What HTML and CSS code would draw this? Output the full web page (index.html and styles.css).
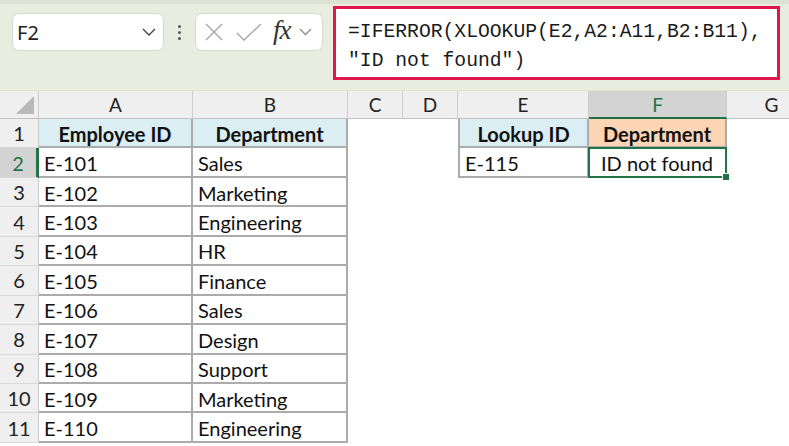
FILE: index.html
```html
<!DOCTYPE html>
<html>
<head>
    <title>IFERROR XLOOKUP</title>
    <link rel="stylesheet" href="styles.css">
</head>
<body>
    <!-- Formula bar -->
    <div class="topbar">
        <div class="namebox">
            <span>F2</span>
            <svg class="chev" width="14" height="8" viewBox="0 0 14 8"><path d="M1 1 L7 7 L13 1" fill="none" stroke="#444" stroke-width="1.4"/></svg>
        </div>
        <div class="dots"><i></i><i></i><i></i></div>
        <div class="fxbox">
            <svg width="18" height="18" viewBox="0 0 18 18"><path d="M1 1 L17 17 M17 1 L1 17" stroke="#a3a3a3" stroke-width="1.3" fill="none"/></svg>
            <svg width="26" height="18" viewBox="0 0 26 18"><path d="M1 10 L8 17 L25 1" stroke="#a3a3a3" stroke-width="1.3" fill="none"/></svg>
            <span class="fx">fx</span>
            <svg class="chev" width="13" height="8" viewBox="0 0 13 8"><path d="M1 1 L6.5 6.5 L12 1" fill="none" stroke="#8a8a8a" stroke-width="1.3"/></svg>
        </div>
        <div class="formula">=IFERROR(XLOOKUP(E2,A2:A11,B2:B11),<br>"ID not found")</div>
    </div>

    <!-- Sheet -->
    <div class="sheet">
        <div class="ch corner"><span class="tri"></span></div>
        <div class="ch">A</div>
        <div class="ch">B</div>
        <div class="ch">C</div>
        <div class="ch">D</div>
        <div class="ch">E</div>
        <div class="ch sel">F</div>
        <div class="ch">G</div>

        <div class="rh">1</div>
        <div class="c tb hd blue">Employee ID</div>
        <div class="c tb hd blue">Department</div>
        <div class="c"></div>
        <div class="c"></div>
        <div class="c tb hd blue lb">Lookup ID</div>
        <div class="c tb hd peach">Department</div>
        <div class="c"></div>

        <div class="rh sel">2</div>
        <div class="c tb">E-101</div>
        <div class="c tb">Sales</div>
        <div class="c"></div>
        <div class="c"></div>
        <div class="c tb lb">E-115</div>
        <div class="c tb center active">ID not found</div>
        <div class="c"></div>

        <div class="rh">3</div>
        <div class="c tb">E-102</div>
        <div class="c tb">Marketing</div>
        <div class="c"></div><div class="c"></div><div class="c"></div><div class="c"></div><div class="c"></div>

        <div class="rh">4</div>
        <div class="c tb">E-103</div>
        <div class="c tb">Engineering</div>
        <div class="c"></div><div class="c"></div><div class="c"></div><div class="c"></div><div class="c"></div>

        <div class="rh">5</div>
        <div class="c tb">E-104</div>
        <div class="c tb">HR</div>
        <div class="c"></div><div class="c"></div><div class="c"></div><div class="c"></div><div class="c"></div>

        <div class="rh">6</div>
        <div class="c tb">E-105</div>
        <div class="c tb">Finance</div>
        <div class="c"></div><div class="c"></div><div class="c"></div><div class="c"></div><div class="c"></div>

        <div class="rh">7</div>
        <div class="c tb">E-106</div>
        <div class="c tb">Sales</div>
        <div class="c"></div><div class="c"></div><div class="c"></div><div class="c"></div><div class="c"></div>

        <div class="rh">8</div>
        <div class="c tb">E-107</div>
        <div class="c tb">Design</div>
        <div class="c"></div><div class="c"></div><div class="c"></div><div class="c"></div><div class="c"></div>

        <div class="rh">9</div>
        <div class="c tb">E-108</div>
        <div class="c tb">Support</div>
        <div class="c"></div><div class="c"></div><div class="c"></div><div class="c"></div><div class="c"></div>

        <div class="rh">10</div>
        <div class="c tb">E-109</div>
        <div class="c tb">Marketing</div>
        <div class="c"></div><div class="c"></div><div class="c"></div><div class="c"></div><div class="c"></div>

        <div class="rh">11</div>
        <div class="c tb">E-110</div>
        <div class="c tb">Engineering</div>
        <div class="c"></div><div class="c"></div><div class="c"></div><div class="c"></div><div class="c"></div>
    </div>
</body>
</html>
```

FILE: styles.css
```css
/* Page */
body {
    margin: 0;
    background: #ffffff;
    overflow: hidden;
    font-family: "Lato", "Open Sans", sans-serif;
    color: #111;
}

/* Formula bar area */
.topbar {
    height: 91px;
    background: #e9ede0;
    border-top: 4px solid #dde2d3;
    border-bottom: 1px solid #dfe3d6;
    display: flex;
    align-items: flex-start;
    box-sizing: border-box;
}

.namebox {
    margin: 9px 0 0 12px;
    width: 152px;
    height: 38px;
    box-sizing: border-box;
    background: #fff;
    border: 1px solid #d6d8d2;
    border-radius: 7px;
    display: flex;
    align-items: center;
    justify-content: space-between;
    padding: 0 7px 0 4px;
    font-family: "Noto Sans", "Open Sans", sans-serif;
    font-size: 20px;
    color: #222;
}

.dots {
    width: 31px;
    height: 38px;
    margin-top: 9px;
    display: flex;
    flex-direction: column;
    align-items: center;
    justify-content: center;
    gap: 3px;
}

.dots i {
    width: 3px;
    height: 3px;
    background: #555;
    border-radius: 50%;
}

.fxbox {
    margin-top: 9px;
    width: 128px;
    height: 38px;
    box-sizing: border-box;
    background: #fff;
    border: 1px solid #d6d8d2;
    border-radius: 7px;
    display: flex;
    align-items: center;
    padding: 0 4px 0 9px;
    gap: 13px;
}

.fxbox .fx {
    font-family: "Liberation Serif", serif;
    font-style: italic;
    font-size: 27px;
    line-height: 1;
    color: #333;
    margin: -4px 0 0 -2px;
    letter-spacing: -1px;
}

.fxbox .chev {
    margin-left: -5px;
}

.formula {
    margin: 2px 0 0 10px;
    width: 447px;
    height: 74px;
    box-sizing: border-box;
    background: #fff;
    border: 3px solid #e0174a;
    padding: 9px 0 0 12px;
    font-family: "Liberation Mono", "DejaVu Sans Mono", monospace;
    font-size: 19.7px;
    line-height: 29px;
    color: #1a1a1a;
    white-space: nowrap;
}

/* Grid */
.sheet {
    display: grid;
    grid-template-columns: 39px 154px 155px 55px 55px 131px 138px 90px;
    grid-template-rows: 28px repeat(11, 29.45px);
    width: 817px;
}

.ch {
    background: #efefef;
    border-right: 1px solid #cdcdcd;
    border-bottom: 1px solid #c2c2c2;
    display: flex;
    align-items: center;
    justify-content: center;
    font-size: 19px;
    color: #222;
    box-sizing: border-box;
}

.ch.sel {
    background: #d3d3d3;
    color: #217346;
    border-bottom: 2px solid #217346;
}

.corner {
    position: relative;
}

.corner .tri {
    position: absolute;
    right: 4px;
    bottom: 4px;
    width: 0;
    height: 0;
    border-left: 18px solid transparent;
    border-bottom: 18px solid #b9b9b9;
}

.rh {
    background: #efefef;
    border-right: 1px solid #c8c8c8;
    border-bottom: 1px solid #dadada;
    display: flex;
    align-items: center;
    justify-content: center;
    font-size: 20px;
    color: #222;
    box-sizing: border-box;
}

.rh.sel {
    background: #d3d3d3;
    color: #217346;
    border-right: 3px solid #217346;
}

.c {
    display: flex;
    align-items: center;
    padding: 2px 0 0 5px;
    font-size: 20px;
    box-sizing: border-box;
    white-space: nowrap;
}

.tb {
    border-right: 2px solid #ababab;
    border-bottom: 2px solid #ababab;
}

.lb {
    border-left: 2px solid #ababab;
}

.hd {
    font-weight: bold;
    justify-content: center;
    padding-left: 0;
}

.blue {
    background: #daeef3;
}

.peach {
    background: #fcd5b4;
}

.center {
    justify-content: center;
    padding-left: 0;
}

/* Active cell */
.active {
    position: relative;
}

.active::after {
    content: "";
    position: absolute;
    left: -1px;
    top: -1px;
    right: -2px;
    bottom: -2px;
    border: 2px solid #217346;
}

.active::before {
    content: "";
    position: absolute;
    right: -5px;
    bottom: -5px;
    width: 6px;
    height: 6px;
    background: #217346;
    border: 1px solid #fff;
    z-index: 1;
}
```
